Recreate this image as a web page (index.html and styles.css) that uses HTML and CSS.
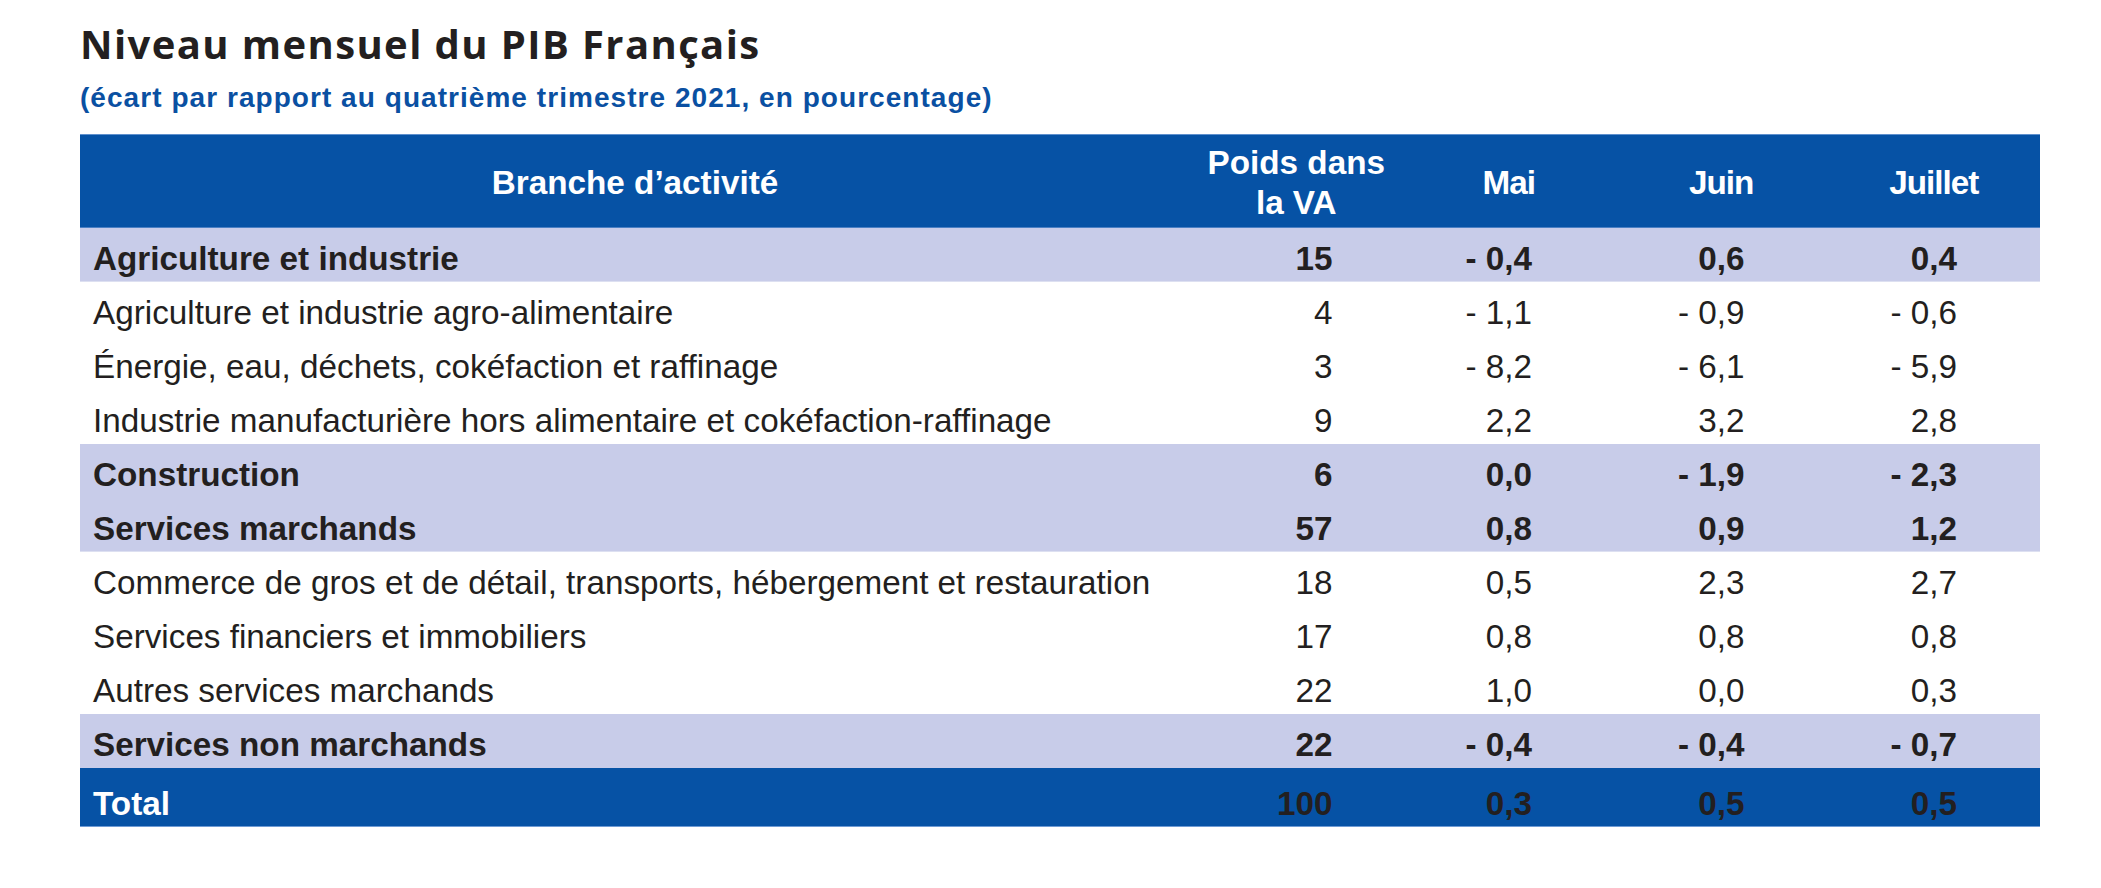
FILE: index.html
```html
<!DOCTYPE html>
<html lang="fr">
<head>
<meta charset="utf-8">
<title>Niveau mensuel du PIB Français</title>
<link rel="stylesheet" href="styles.css">
</head>
<body>
<div class="page">
  <h1 class="title">Niveau mensuel du PIB Français</h1>
  <p class="subtitle">(écart par rapport au quatrième trimestre 2021, en pourcentage)</p>
  <table class="tbl">
    <colgroup>
      <col class="c-label">
      <col class="c-num">
      <col class="c-num">
      <col class="c-num">
      <col class="c-num">
    </colgroup>
    <thead>
      <tr>
        <th class="h-label">Branche d’activité</th>
        <th class="h-poids">Poids dans<br>la VA</th>
        <th class="h-month">Mai</th>
        <th class="h-month">Juin</th>
        <th class="h-month">Juillet</th>
      </tr>
    </thead>
    <tbody>
      <tr class="group">
        <td class="label">Agriculture et industrie</td>
        <td class="num poids">15</td><td class="num">- 0,4</td><td class="num">0,6</td><td class="num">0,4</td>
      </tr>
      <tr>
        <td class="label">Agriculture et industrie agro-alimentaire</td>
        <td class="num poids">4</td><td class="num">- 1,1</td><td class="num">- 0,9</td><td class="num">- 0,6</td>
      </tr>
      <tr>
        <td class="label">Énergie, eau, déchets, cokéfaction et raffinage</td>
        <td class="num poids">3</td><td class="num">- 8,2</td><td class="num">- 6,1</td><td class="num">- 5,9</td>
      </tr>
      <tr>
        <td class="label">Industrie manufacturière hors alimentaire et cokéfaction-raffinage</td>
        <td class="num poids">9</td><td class="num">2,2</td><td class="num">3,2</td><td class="num">2,8</td>
      </tr>
      <tr class="group no-line">
        <td class="label">Construction</td>
        <td class="num poids">6</td><td class="num">0,0</td><td class="num">- 1,9</td><td class="num">- 2,3</td>
      </tr>
      <tr class="group">
        <td class="label">Services marchands</td>
        <td class="num poids">57</td><td class="num">0,8</td><td class="num">0,9</td><td class="num">1,2</td>
      </tr>
      <tr>
        <td class="label">Commerce de gros et de détail, transports, hébergement et restauration</td>
        <td class="num poids">18</td><td class="num">0,5</td><td class="num">2,3</td><td class="num">2,7</td>
      </tr>
      <tr>
        <td class="label">Services financiers et immobiliers</td>
        <td class="num poids">17</td><td class="num">0,8</td><td class="num">0,8</td><td class="num">0,8</td>
      </tr>
      <tr>
        <td class="label">Autres services marchands</td>
        <td class="num poids">22</td><td class="num">1,0</td><td class="num">0,0</td><td class="num">0,3</td>
      </tr>
      <tr class="group no-line">
        <td class="label">Services non marchands</td>
        <td class="num poids">22</td><td class="num">- 0,4</td><td class="num">- 0,4</td><td class="num">- 0,7</td>
      </tr>
      <tr class="total">
        <td class="label">Total</td>
        <td class="num poids">100</td><td class="num">0,3</td><td class="num">0,5</td><td class="num">0,5</td>
      </tr>
    </tbody>
  </table>
</div>
</body>
</html>
```
FILE: styles.css
```css
html, body {
  margin: 0;
  padding: 0;
  background: #ffffff;
}

.page {
  padding: 22px 0 0 80px;
}

.title {
  margin: 0;
  font-family: "Open Sans", "Noto Sans", sans-serif;
  font-weight: 700;
  font-size: 40px;
  line-height: 44px;
  color: #231f20;
  letter-spacing: 1.4px;
}

.subtitle {
  margin: 16px 0 0;
  font-family: "Liberation Sans", Arial, sans-serif;
  font-weight: 700;
  font-size: 28px;
  line-height: 32px;
  color: #0a50a2;
  letter-spacing: 1.05px;
}

.tbl {
  margin-top: 20px;
  border-collapse: separate;
  border-spacing: 0;
  table-layout: fixed;
  width: 1960px;
  font-family: "Liberation Sans", Arial, sans-serif;
  font-size: 33.25px;
  color: #231f20;
}

.c-label { width: 1110px; }
.c-num { width: 212.5px; }

.tbl th {
  background: #0652a5;
  color: #ffffff;
  font-weight: 700;
  line-height: 40px;
  height: 90px;
  padding: 4px 0 0;
  vertical-align: middle;
  text-align: center;
  box-shadow: inset 0 1px 0 #5f90cd, inset 0 -1px 0 #4b80c4;
}

.tbl th.h-month {
  letter-spacing: -1px;
}

.tbl td {
  padding: 8px 0 0;
  line-height: 46px;
  vertical-align: top;
  white-space: nowrap;
}

.tbl td.label {
  padding-left: 13px;
}

.tbl td.num {
  text-align: right;
  padding-right: 83px;
}

.tbl td.num.poids {
  padding-right: 70px;
}

.tbl tr.group td {
  background: #c8cce9;
  font-weight: 700;
  box-shadow: inset 0 -1px 0 #dde0f1;
}

.tbl tr.group.no-line td {
  box-shadow: none;
}

.tbl tr.total td {
  background: #0652a5;
  font-weight: 700;
  padding-top: 13px;
  box-shadow: inset 0 -1px 0 #6e9bd5;
}

.tbl tr.total td.label {
  color: #ffffff;
}
```
